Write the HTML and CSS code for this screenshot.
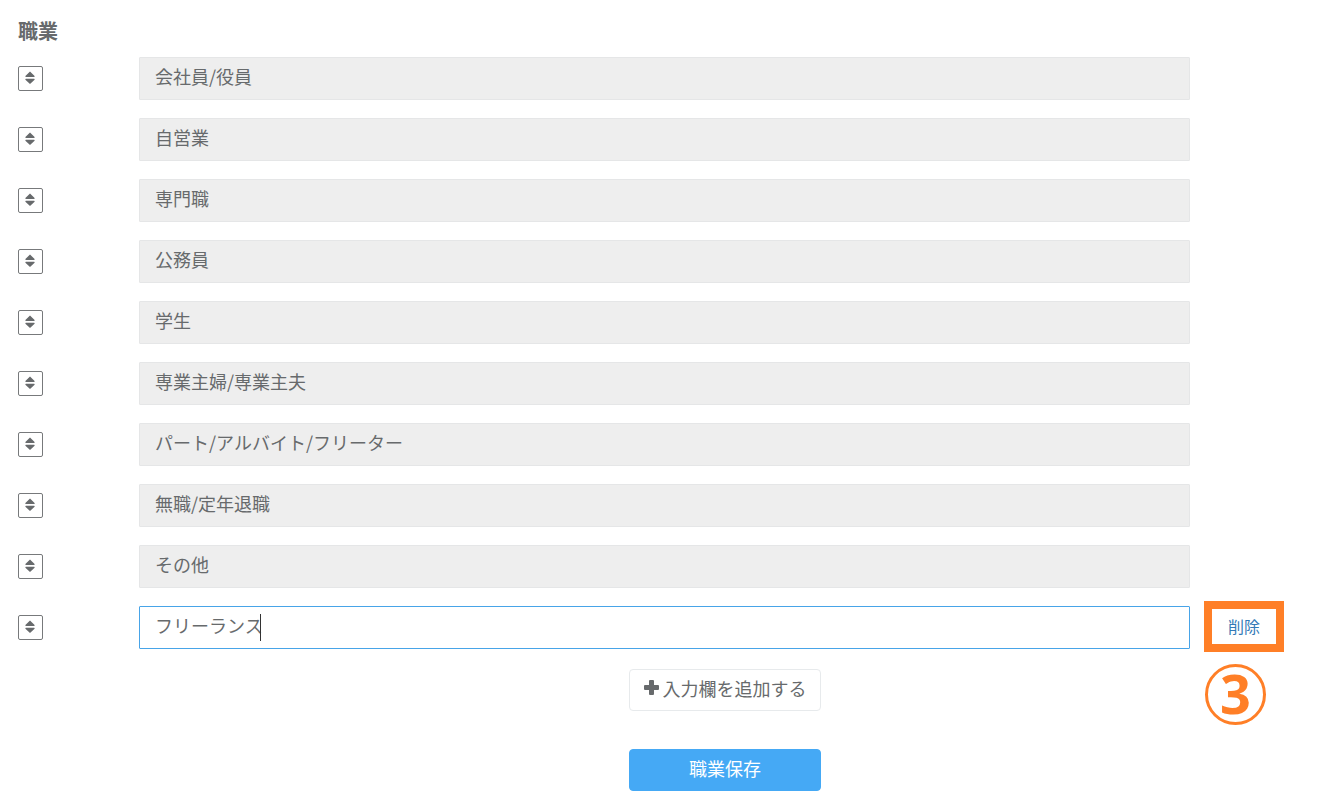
FILE: index.html
```html
<!DOCTYPE html>
<html lang="ja">
<head>
    <meta charset="UTF-8">
    <title>職業</title>
    <link rel="stylesheet" href="styles.css">
</head>
<body>
    <!-- 並び替えアイコン -->
    <svg class="icon-defs" aria-hidden="true">
        <symbol id="icon-sort" viewBox="0 0 10 14">
            <path d="M5 .5 L9.6 5 Q9.9 6 9 6 H1 Q.1 6 .4 5 Z M5 13 L9.6 8.8 Q9.9 7.8 9 7.8 H1 Q.1 7.8 .4 8.8 Z"/>
        </symbol>
    </svg>

    <form class="job-form">
        <h1 class="form-title">職業</h1>

        <div class="job-list">
            <div class="job-row">
                <button type="button" class="sort-button" aria-label="並び替え"><svg><use href="#icon-sort"/></svg></button>
                <input class="job-input" type="text" aria-label="職業1" value="会社員/役員" disabled>
            </div>
            <div class="job-row">
                <button type="button" class="sort-button" aria-label="並び替え"><svg><use href="#icon-sort"/></svg></button>
                <input class="job-input" type="text" aria-label="職業2" value="自営業" disabled>
            </div>
            <div class="job-row">
                <button type="button" class="sort-button" aria-label="並び替え"><svg><use href="#icon-sort"/></svg></button>
                <input class="job-input" type="text" aria-label="職業3" value="専門職" disabled>
            </div>
            <div class="job-row">
                <button type="button" class="sort-button" aria-label="並び替え"><svg><use href="#icon-sort"/></svg></button>
                <input class="job-input" type="text" aria-label="職業4" value="公務員" disabled>
            </div>
            <div class="job-row">
                <button type="button" class="sort-button" aria-label="並び替え"><svg><use href="#icon-sort"/></svg></button>
                <input class="job-input" type="text" aria-label="職業5" value="学生" disabled>
            </div>
            <div class="job-row">
                <button type="button" class="sort-button" aria-label="並び替え"><svg><use href="#icon-sort"/></svg></button>
                <input class="job-input" type="text" aria-label="職業6" value="専業主婦/専業主夫" disabled>
            </div>
            <div class="job-row">
                <button type="button" class="sort-button" aria-label="並び替え"><svg><use href="#icon-sort"/></svg></button>
                <input class="job-input" type="text" aria-label="職業7" value="パート/アルバイト/フリーター" disabled>
            </div>
            <div class="job-row">
                <button type="button" class="sort-button" aria-label="並び替え"><svg><use href="#icon-sort"/></svg></button>
                <input class="job-input" type="text" aria-label="職業8" value="無職/定年退職" disabled>
            </div>
            <div class="job-row">
                <button type="button" class="sort-button" aria-label="並び替え"><svg><use href="#icon-sort"/></svg></button>
                <input class="job-input" type="text" aria-label="職業9" value="その他" disabled>
            </div>
            <!-- 入力中の行 -->
            <div class="job-row editing">
                <button type="button" class="sort-button" aria-label="並び替え"><svg><use href="#icon-sort"/></svg></button>
                <div class="input-wrap">
                    <input class="job-input" type="text" aria-label="職業10" value="フリーランス">
                    <span class="caret"></span>
                </div>
                <div class="delete-cell">
                    <a class="delete-link" href="#">削除</a>
                    <span class="step-badge">3</span>
                </div>
            </div>
        </div>

        <div class="actions">
            <button type="button" class="btn btn-add">
                <svg class="icon-plus" viewBox="0 0 15 15" aria-hidden="true"><path d="M6 0h3q1 0 1 1v4h4q1 0 1 1v3q0 1-1 1h-4v4q0 1-1 1h-3q-1 0-1-1v-4h-4q-1 0-1-1v-3q0-1 1-1h4v-4q0-1 1-1z"/></svg>
                入力欄を追加する
            </button>
            <button type="submit" class="btn btn-save">職業保存</button>
        </div>
    </form>
</body>
</html>
```
FILE: styles.css
```css
* {
    margin: 0;
    padding: 0;
    box-sizing: border-box;
}

body {
    font-family: "Noto Sans CJK JP", sans-serif;
    font-size: 18px;
    color: #676a6c;
    background: #fff;
}

button,
input {
    font: inherit;
    color: inherit;
}

.icon-defs {
    display: none;
}

.job-form {
    padding: 16px 18px;
}

.form-title {
    font-size: 20px;
    line-height: 30px;
    font-weight: 700;
    margin-bottom: 11px;
}

/* 入力欄の一覧 */
.job-list {
    display: flex;
    flex-direction: column;
    gap: 18px;
}

.job-row {
    display: grid;
    grid-template-columns: 121px 1fr 132px;
    align-items: center;
}

.sort-button {
    display: flex;
    align-items: center;
    justify-content: center;
    width: 25px;
    height: 25px;
    padding: 0 1px 2px 0;
    background: #fff;
    border: 1px solid #77797b;
    border-radius: 2px;
}

.sort-button svg {
    width: 10px;
    height: 14px;
    fill: #676a6c;
}

.job-input {
    display: block;
    width: 100%;
    height: 43px;
    padding: 0 15px 5px;
    background: #fff;
    border: 1px solid #e5e6e7;
    border-radius: 1px;
    outline: none;
}

.job-input:disabled {
    background: #eee;
}

.editing .job-input {
    border-color: #48a4e8;
}

.input-wrap {
    position: relative;
}

.caret {
    position: absolute;
    left: 121px;
    top: 8px;
    width: 1px;
    height: 27px;
    background: #333;
}

/* 削除リンクと手順番号 */
.delete-cell {
    position: relative;
    padding: 0 0 2px 22px;
}

.delete-link {
    display: block;
    width: 64px;
    font-size: 16px;
    line-height: 35px;
    text-align: center;
    color: #337ab7;
    text-decoration: none;
    outline: 8px solid #ff7f27;
}

.step-badge {
    position: absolute;
    left: 15px;
    top: 55px;
    width: 61px;
    height: 61px;
    border: 3px solid #ff7f27;
    border-radius: 50%;
    font-family: "Noto Sans", sans-serif;
    font-size: 54px;
    font-weight: 700;
    line-height: 53px;
    text-align: center;
    color: #ff7f27;
}

/* ボタン */
.actions {
    display: flex;
    flex-direction: column;
    align-items: center;
    gap: 38px;
    margin-top: 20px;
    padding-left: 110px;
}

.btn {
    display: flex;
    align-items: center;
    justify-content: center;
    gap: 4px;
    width: 192px;
    height: 42px;
    padding-bottom: 5px;
    font-size: 18px;
    border-radius: 4px;
    cursor: pointer;
}

.btn-add {
    background: #fff;
    border: 1px solid #e7eaec;
}

.btn-save {
    color: #fff;
    background: #45a9f5;
    border: 1px solid #45a9f5;
}

.icon-plus {
    width: 15px;
    height: 15px;
    fill: #676a6c;
}
```
